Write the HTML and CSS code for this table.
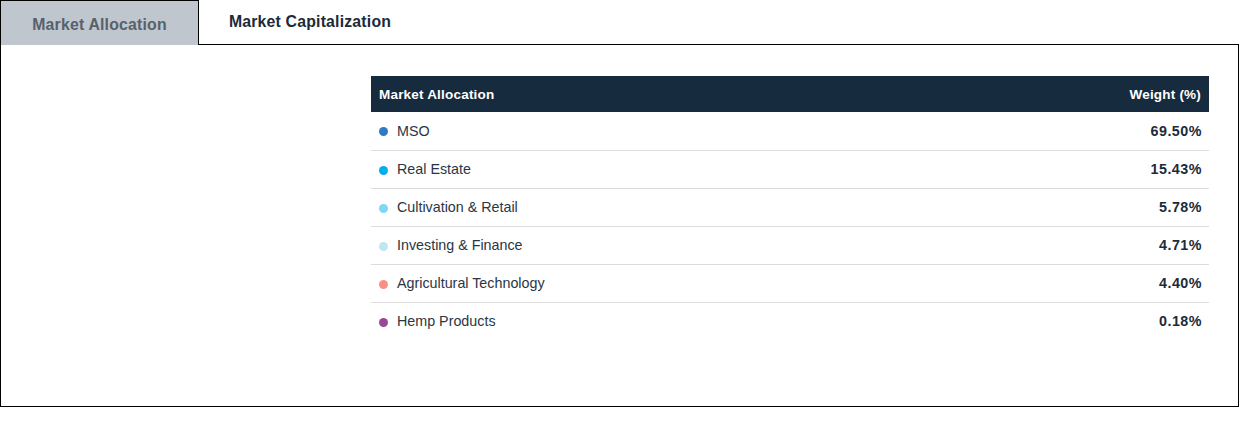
FILE: index.html
```html
<!DOCTYPE html>
<html>
<head>
<meta charset="utf-8">
<link rel="stylesheet" href="styles.css">
</head>
<body>
<div class="tabs">
  <div class="tab active">Market Allocation</div>
  <div class="tab">Market Capitalization</div>
  <div class="tab-fill"></div>
</div>
<div class="panel">
  <table class="alloc">
    <thead>
      <tr><th class="name">Market Allocation</th><th class="weight">Weight (%)</th></tr>
    </thead>
    <tbody>
      <tr><td class="name"><span class="dot c1"></span>MSO</td><td class="weight">69.50%</td></tr>
      <tr><td class="name"><span class="dot c2"></span>Real Estate</td><td class="weight">15.43%</td></tr>
      <tr><td class="name"><span class="dot c3"></span>Cultivation &amp; Retail</td><td class="weight">5.78%</td></tr>
      <tr><td class="name"><span class="dot c4"></span>Investing &amp; Finance</td><td class="weight">4.71%</td></tr>
      <tr><td class="name"><span class="dot c5"></span>Agricultural Technology</td><td class="weight">4.40%</td></tr>
      <tr><td class="name"><span class="dot c6"></span>Hemp Products</td><td class="weight">0.18%</td></tr>
    </tbody>
  </table>
</div>
</body>
</html>
```
FILE: styles.css
```css
* { box-sizing: border-box; }
body {
  margin: 0;
  background: #fff;
  font-family: "Liberation Sans", Arial, sans-serif;
  color: #1d2a38;
  width: 1239px;
}
.tabs {
  display: flex;
  height: 45px;
}
.tab {
  font-weight: bold;
  font-size: 15.8px;
  letter-spacing: 0.2px;
  display: flex;
  align-items: center;
  justify-content: center;
}
.tab.active {
  width: 199px;
  background: #bfc6cd;
  color: #56616c;
  border: 1px solid #000;
  border-bottom: none;
  padding-top: 4px;
}
.tab:not(.active) {
  width: 222px;
  border-bottom: 1px solid #000;
  color: #1d2a38;
  padding-bottom: 1px;
}
.tab-fill {
  flex: 1;
  border-bottom: 1px solid #000;
}
.panel {
  border: 1px solid #000;
  border-top: none;
  height: 362px;
  padding: 31px 29px 0 370px;
}
.alloc {
  width: 838px;
  border-collapse: collapse;
}
.alloc th {
  background: #172b3e;
  color: #fff;
  font-size: 13.5px;
  letter-spacing: 0.2px;
  font-weight: bold;
  height: 36px;
  padding: 0 8px;
}
.alloc th.name { text-align: left; }
.alloc th.weight { text-align: right; }
.alloc td {
  height: 38px;
  font-size: 14.3px;
  padding: 0 8px;
  border-bottom: 1px solid #dcdcdc;
  color: #2a3644;
}
.alloc tr:last-child td { border-bottom: none; }
.alloc td.weight {
  text-align: right;
  font-weight: bold;
  letter-spacing: 0.5px;
  padding-right: 7px;
  color: #1d2a38;
}
.dot {
  display: inline-block;
  width: 9px;
  height: 9px;
  border-radius: 50%;
  margin-right: 9px;
  vertical-align: -0.5px;
}
.c1 { background: #2f7ac4; }
.c2 { background: #00aeef; }
.c3 { background: #7fd6f7; }
.c4 { background: #bfe6f3; }
.c5 { background: #fb8f86; }
.c6 { background: #994799; }
```
